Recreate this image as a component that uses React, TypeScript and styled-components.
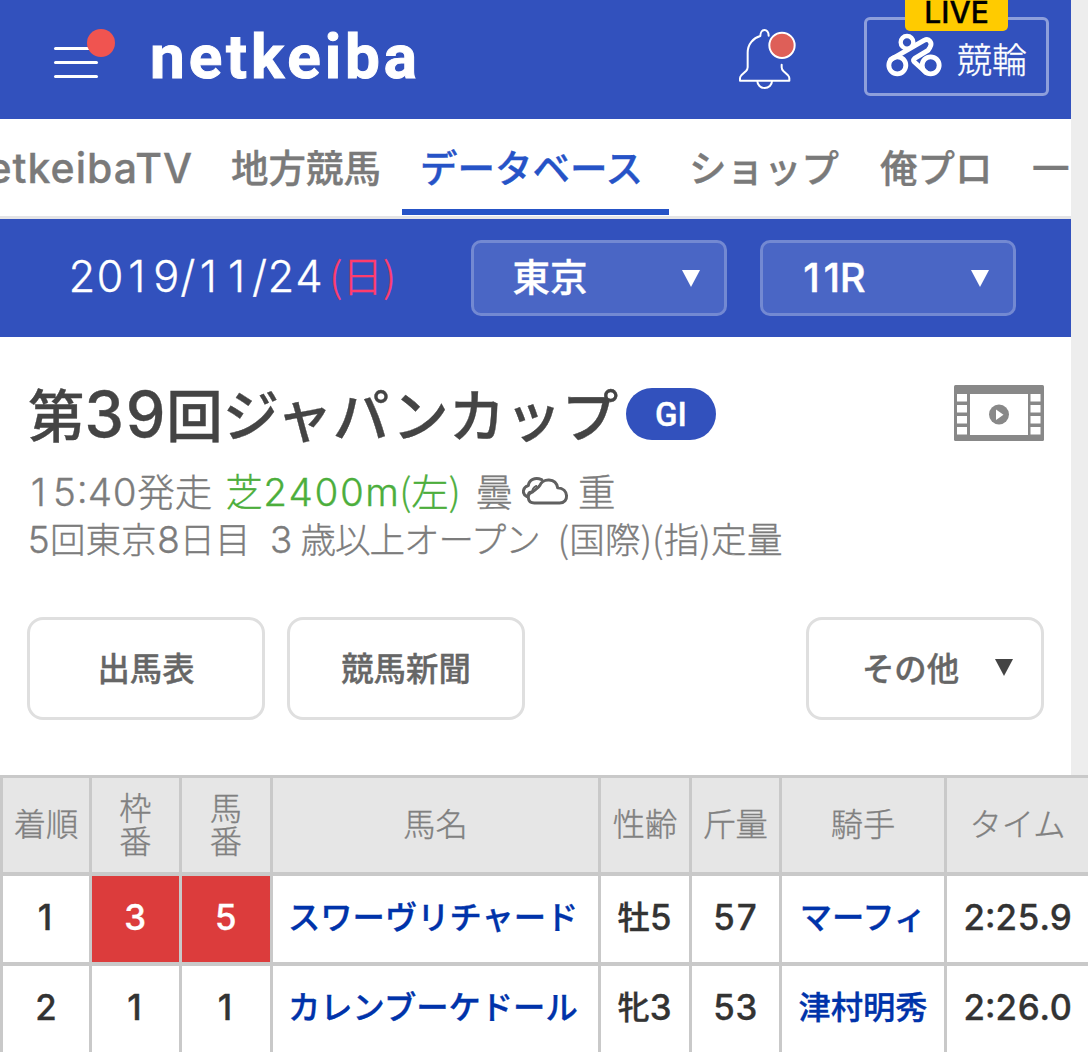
import React from "react";
import styled, { createGlobalStyle } from "styled-components";

const jp = '"Noto Sans CJK JP", sans-serif';
const latin = 'Inter, "Noto Sans CJK JP", sans-serif';
const blue = "#3251bd";

const Global = createGlobalStyle`
  * { box-sizing: border-box; }
  body { margin: 0; background: #ededed; font-family: ${jp}; overflow: hidden; -webkit-text-stroke: 0.35px currentColor; }
`;

const Page = styled.div`
  width: 1088px;
  height: 1052px;
  overflow: hidden;
`;

const Content = styled.main`
  width: 1071px;
  background: #fff;
`;

const NumText = styled.span<{ $size?: string; $ls?: string }>`
  font-family: ${latin};
  font-feature-settings: "tnum" 1;
  font-size: ${(p) => p.$size || "1.08em"};
  letter-spacing: ${(p) => p.$ls || "0"};
  line-height: 1;
`;

/* a "1" without its foot, padded to the width of the other figures */
const One = styled.span`
  font-feature-settings: "tnum" 0;
  padding: 0 0.16em 0 0.1em;
`;

const Num = ({ children, size, ls }: { children: string; size?: string; ls?: string }) => (
  <NumText $size={size} $ls={ls}>
    {children.split(/(1)/).map((part, i) => (part === "1" ? <One key={i}>1</One> : part))}
  </NumText>
);

/* Japanese run next to figures, lifted to share their optical centre */
const Kana = styled.span`
  padding-bottom: 6px;
`;

/* header */
const Header = styled.header`
  height: 119px;
  background: ${blue};
  display: flex;
  align-items: flex-start;
  padding: 0 22px 0 54px;
`;

const MenuButton = styled.div`
  position: relative;
  width: 44px;
  margin-top: 47px;
  display: grid;
  gap: 11px;
`;

const MenuLine = styled.span`
  height: 3px;
  border-radius: 2px;
  background: #fff;
`;

const MenuDot = styled.span`
  position: absolute;
  left: 33px;
  top: -18px;
  width: 28px;
  height: 28px;
  border-radius: 50%;
  background: #f05450;
`;

const Logo = styled.div`
  width: 270px;
  margin: 19px 0 0 52px;
  font: 700 62px/76px Roboto, sans-serif;
  letter-spacing: 3.9px;
  -webkit-text-stroke: 1px #fff;
  color: #fff;
  white-space: nowrap;
`;

const Bell = styled.svg`
  margin: 27px 0 0 318px;
  width: 60px;
  height: 64px;
  flex: none;
`;

const Keirin = styled.div`
  position: relative;
  width: 185px;
  height: 79px;
  margin: 17px 0 0 auto;
  padding: 0 0 4px 18px;
  border: 3px solid rgba(255, 255, 255, 0.45);
  border-radius: 6px;
  display: flex;
  align-items: center;
  gap: 14px;
  color: #fff;
  font: 300 35px/40px ${jp};
  white-space: nowrap;
`;

const KeirinLabel = styled.span`
  padding-top: 6px;
`;

const Live = styled.span`
  position: absolute;
  left: 38px;
  top: -26px;
  width: 103px;
  height: 37px;
  border-radius: 5px;
  background: #ffcb00;
  color: #000;
  text-align: center;
  font: 500 30px/36px ${latin};
`;

/* navigation */
const Nav = styled.nav`
  height: 100px;
  display: flex;
  overflow: hidden;
  border-bottom: 3px solid #e4e4e6;
`;

const NavItem = styled.a<{ $active?: boolean; $width: number }>`
  flex: none;
  width: ${(p) => p.$width}px;
  height: 96px;
  padding: 20px 20px 0 ${(p) => (p.$active ? 18 : 20)}px;
  border-bottom: 6px solid ${(p) => (p.$active ? "#2653c7" : "transparent")};
  color: ${(p) => (p.$active ? "#2653c7" : "#7a7a7a")};
  font-size: 37.5px;
  line-height: 54px;
  font-weight: 500;
  white-space: nowrap;
`;

const NavFirst = styled(NavItem)`
  padding-left: 0;
  padding-right: 18px;
  display: flex;
  justify-content: flex-end;
  font: 500 41px/58px ${latin};
  letter-spacing: 1px;
`;

/* date bar */
const DateBar = styled.div`
  height: 118px;
  background: ${blue};
  display: flex;
  align-items: center;
  padding: 0 55px 0 68px;
  color: #fff;
`;

const DateText = styled.div`
  width: 404px;
  font-weight: 300;
  font-size: 41px;
  line-height: 60px;
  white-space: nowrap;
  display: flex;
  align-items: center;
  padding-bottom: 3px;
`;

const Sunday = styled.span`
  margin-left: 6px;
  padding-bottom: 6px;
  color: #ff3c6c;
`;

const Select = styled.div`
  width: 256px;
  height: 76px;
  margin-right: 33px;
  padding: 0 24px 0 38px;
  border: 3px solid rgba(255, 255, 255, 0.32);
  border-radius: 10px;
  background: rgba(255, 255, 255, 0.12);
  background-clip: padding-box;
  display: flex;
  align-items: center;
  justify-content: space-between;
  font-size: 37.5px;
  line-height: 54px;
  font-weight: 500;
  &:last-child { margin-right: 0; padding-left: 36px; }
`;

/* race heading */
const Race = styled.section`
  height: 438px;
  padding: 47px 27px 0 27px;
`;

const TitleRow = styled.div`
  display: flex;
  align-items: center;
  height: 60px;
`;

const Title = styled.h1`
  margin: 0;
  width: 599px;
  padding: 0 0 1px 1px;
  color: #444;
  font-size: 56.5px;
  line-height: 60px;
  font-weight: 500;
  white-space: nowrap;
`;

const Grade = styled.span`
  width: 90px;
  height: 52px;
  border-radius: 26px;
  background: ${blue};
  color: #fff;
  text-align: center;
  font: 500 33px/54px Roboto, sans-serif;
`;

const Film = styled.svg`
  width: 90px;
  height: 56px;
  margin: 0 0 2px auto;
`;

const Info = styled.div<{ $size: number; $top?: number }>`
  display: flex;
  align-items: center;
  height: 48px;
  margin-top: ${(p) => p.$top || 0}px;
  color: #7c7c7c;
  font-size: ${(p) => p.$size}px;
  font-weight: 300;
  line-height: 48px;
  white-space: nowrap;
`;

const Part = styled.span<{ $left?: number; $green?: boolean; $ls?: number }>`
  margin-left: ${(p) => p.$left || 0}px;
  letter-spacing: ${(p) => p.$ls || 0}px;
  ${(p) => p.$green && "color: #4cae3c;"}
`;

const Cloud = styled.svg`
  width: 47px;
  height: 30px;
  margin: 2px 9px 0 9px;
`;

const Actions = styled.div`
  display: flex;
  gap: 22px;
  margin-top: 55px;
`;

const Action = styled.div<{ $right?: boolean }>`
  width: 238px;
  height: 103px;
  border: 3px solid #dfdfdf;
  border-radius: 16px;
  display: flex;
  align-items: center;
  justify-content: center;
  gap: 36px;
  ${(p) => p.$right && "margin-left: auto; padding-left: 25px;"}
  color: #666;
  font-size: 32.4px;
  line-height: 46px;
  font-weight: 500;
  padding-bottom: 3px;
`;

/* results */
const Table = styled.div`
  width: 1088px;
  padding: 3px 0 0 3px;
  background: #c9c9c9;
  display: grid;
  grid-template-columns: 86px 87px 88px 325px 88px 87px 162px 141px;
  grid-template-rows: 94px 86px 86px;
  gap: 4px 3px;
`;

const Head = styled.div`
  background: #e6e6e6;
  color: #808080;
  display: flex;
  align-items: center;
  justify-content: center;
  text-align: center;
  font-size: 32.3px;
  line-height: 33px;
  font-weight: 300;
  white-space: nowrap;
  padding-bottom: 5px;
`;

const Stack = styled.span`
  width: 33px;
  white-space: normal;
`;

const Cell = styled.div<{ $tone?: "link" | "red" }>`
  background: ${(p) => (p.$tone === "red" ? "#dc3c3c" : "#fff")};
  color: ${(p) => (p.$tone === "link" ? "#0033aa" : p.$tone === "red" ? "#fff" : "#333")};
  display: flex;
  align-items: center;
  justify-content: center;
  font-size: 32.3px;
  line-height: 46px;
  font-weight: 500;
  white-space: nowrap;
  padding-bottom: ${(p) => (p.$tone === "link" ? 8 : 3)}px;
`;

const NameCell = styled(Cell)`
  justify-content: flex-start;
  padding-left: 15px;
`;

const Arrow = ({ color }: { color: string }) => (
  <svg width="18" height="17" viewBox="0 0 18 17">
    <path d="M0 0H18L9 17Z" fill={color} />
  </svg>
);

const BellIcon = () => (
  <Bell viewBox="114 81 180 192" fill="none" stroke="#fff" strokeWidth="6" strokeLinecap="round" strokeLinejoin="round">
    <path d="M206 107C206 84 181 84 181 108C160 114 143 132 143 158V202Q143 208 138 213L124 226Q120 230 120 235V242H268V235Q268 230 264 226L250 213Q245 208 245 202V194" />
    <path d="M172 243A22 21 0 0 0 216 243" />
    <circle cx="246" cy="136" r="38" fill="#de5f58" strokeWidth="6" />
  </Bell>
);

const KeirinIcon = () => (
  <svg width="58" height="46" viewBox="555 97 174 138" fill="none" stroke="#fff" strokeWidth="14.5" strokeLinecap="round" strokeLinejoin="round">
    <circle cx="592" cy="197" r="25.5" />
    <circle cx="692" cy="197" r="25.5" />
    <circle cx="621" cy="128" r="19" strokeWidth="13" />
    <path d="M572 180L672 122C688 114 698 130 690 143L684 152L644 176Q638 181 643 187L678 218" />
  </svg>
);

const FilmIcon = () => (
  <Film viewBox="0 0 90 56">
    <rect width="90" height="56" rx="1.5" fill="#888" />
    <rect x="16" y="9" width="58" height="41" fill="#fff" />
    {[3, 76.5].map((x) =>
      [9, 20, 31, 42].map((y) => <rect key={`${x}-${y}`} x={x} y={y} width="10" height="7.5" fill="#fff" />)
    )}
    <circle cx="45" cy="29.5" r="10" fill="#888" />
    <path d="M42 24.5V35L49.5 29.7Z" fill="#fff" />
  </Film>
);

const CloudIcon = () => (
  <Cloud viewBox="15 21 141 90" fill="none" stroke="#606060" strokeWidth="9" strokeLinejoin="round" strokeLinecap="round">
    <path d="M29 82C13 74 18 54 34 50C36 32 54 24 74 32" />
    <path d="M52 102H128C157 102 156 58 122 56C117 26 76 26 68 50C64 58 54 62 46 69C28 74 30 102 52 102Z" fill="#fff" />
    <path d="M33 76C35 68 39 67 46 69C45 62 50 54 58 51" strokeWidth="6" />
  </Cloud>
);

const rows = [
  { rank: "1", frame: "3", no: "5", red: true, name: "スワーヴリチャード", sex: "牡", age: "5", kg: "57", jockey: "マーフィ", time: "2:25.9" },
  { rank: "2", frame: "1", no: "1", red: false, name: "カレンブーケドール", sex: "牝", age: "3", kg: "53", jockey: "津村明秀", time: "2:26.0" },
];

export default function App() {
  return (
    <Page>
      <Global />
      <Content>
        <Header>
          <MenuButton>
            <MenuLine />
            <MenuLine />
            <MenuLine />
            <MenuDot />
          </MenuButton>
          <Logo>netkeiba</Logo>
          <BellIcon />
          <Keirin>
            <Live>LIVE</Live>
            <KeirinIcon />
            <KeirinLabel>競輪</KeirinLabel>
          </Keirin>
        </Header>
        <Nav>
          <NavFirst $width={211}>netkeibaTV</NavFirst>
          <NavItem $width={191}>地方競馬</NavItem>
          <NavItem $width={267} $active>データベース</NavItem>
          <NavItem $width={191}>ショップ</NavItem>
          <NavItem $width={152}>俺プロ</NavItem>
          <NavItem $width={191}>一口馬主</NavItem>
        </Nav>
        <DateBar>
          <DateText>
            <Num size="43.3px">2019/11/24</Num>
            <Sunday>(日)</Sunday>
          </DateText>
          <Select>
            <Kana>東京</Kana>
            <Arrow color="#fff" />
          </Select>
          <Select>
            <Num size="40px" ls="-0.17em">11R</Num>
            <Arrow color="#fff" />
          </Select>
        </DateBar>
        <Race>
          <TitleRow>
            <Title>第<Num size="63px">39</Num>回ジャパンカップ</Title>
            <Grade>GI</Grade>
            <FilmIcon />
          </TitleRow>
          <Info $size={37.5} $top={22}>
            <Part><Num size="38.5px">15:40</Num>発走</Part>
            <Part $left={13} $green>芝<Num size="38.5px" ls="0.7px">2400m</Num>(左)</Part>
            <Part $left={15}>曇</Part>
            <CloudIcon />
            <Part>重</Part>
          </Info>
          <Info $size={35.5}>
            <Part><Num size="37px" ls="-1px">5</Num>回東京<Num size="37px" ls="-1px">8</Num>日目</Part>
            <Part $left={19}><Num size="37px">3</Num></Part>
            <Part $left={7} $ls={-1}>歳以上オープン</Part>
            <Part $left={18} $ls={0.3}>(国際)(指)定量</Part>
          </Info>
          <Actions>
            <Action>出馬表</Action>
            <Action>競馬新聞</Action>
            <Action $right>
              その他
              <Arrow color="#444" />
            </Action>
          </Actions>
        </Race>
      </Content>
      <Table>
        <Head>着順</Head>
        <Head><Stack>枠番</Stack></Head>
        <Head><Stack>馬番</Stack></Head>
        <Head>馬名</Head>
        <Head>性齢</Head>
        <Head>斤量</Head>
        <Head>騎手</Head>
        <Head>タイム</Head>
        {rows.map((r) => (
          <React.Fragment key={r.rank}>
            <Cell><Num>{r.rank}</Num></Cell>
            <Cell $tone={r.red ? "red" : undefined}><Num>{r.frame}</Num></Cell>
            <Cell $tone={r.red ? "red" : undefined}><Num>{r.no}</Num></Cell>
            <NameCell $tone="link">{r.name}</NameCell>
            <Cell><Kana>{r.sex}</Kana><Num>{r.age}</Num></Cell>
            <Cell><Num>{r.kg}</Num></Cell>
            <Cell $tone="link">{r.jockey}</Cell>
            <Cell><Num>{r.time}</Num></Cell>
          </React.Fragment>
        ))}
      </Table>
    </Page>
  );
}
